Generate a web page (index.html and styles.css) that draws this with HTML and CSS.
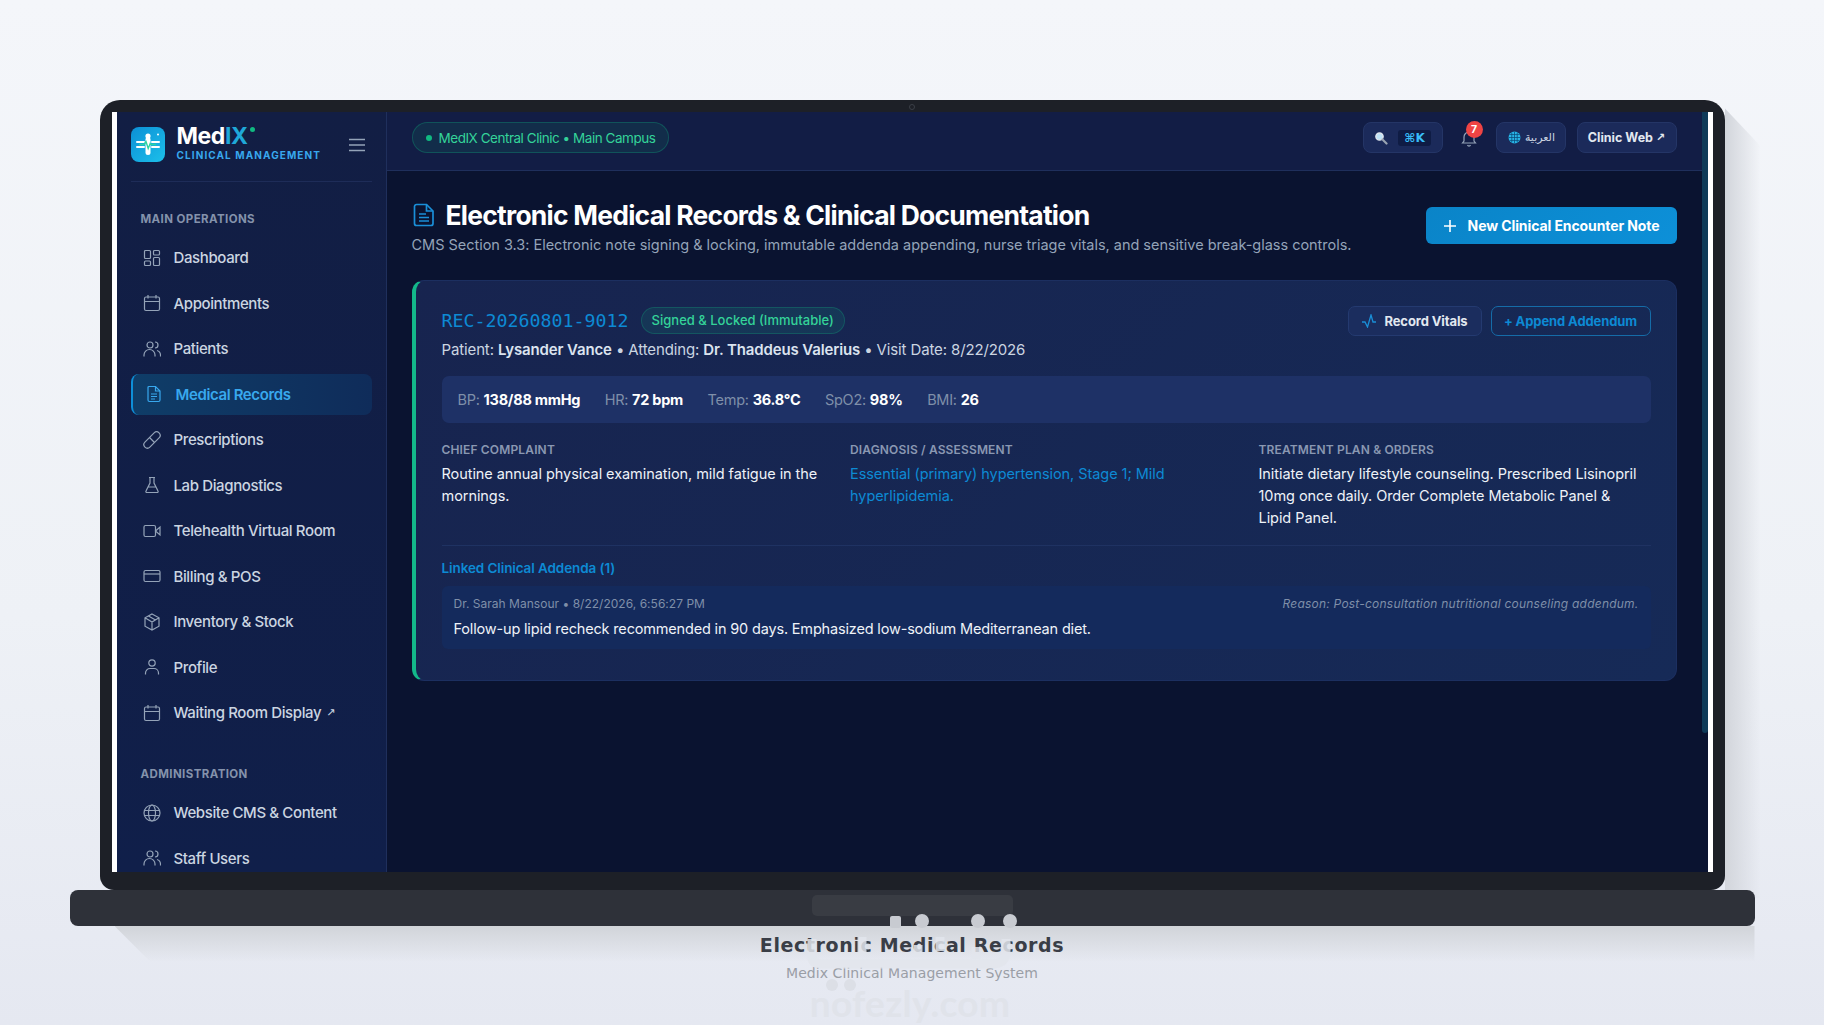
FILE: index.html
```html
<!DOCTYPE html>
<html lang="en">
  <head>
    <meta charset="UTF-8" />
    <meta name="viewport" content="width=device-width, initial-scale=1.0" />
    <title>Electronic Medical Records</title>
    <link rel="stylesheet" href="styles.css">
  </head>
  <body>
    <div class="lid">
      <span class="camera"></span>
      <div class="screen">
        <div class="app">
          <aside class="sidebar">
            <div class="brand">
              <svg class="brand-logo" viewBox="0 0 34 35">
                <defs>
                  <linearGradient id="logoFill" x1="0" y1="0" x2="1" y2="1">
                    <stop offset="0" stop-color="#0c8fd6" />
                    <stop offset="1" stop-color="#1cc0ea" />
                  </linearGradient>
                </defs>
                <rect width="34" height="35" rx="8" fill="url(#logoFill)" />
                <circle cx="17" cy="9" r="2.600" fill="#fff" />
                <rect x="14.500" y="10" width="5" height="18" rx="2.500" fill="#fff" />
                <path d="M6 15h7M21 15h7M6 20h7M21 20h7" stroke="#fff" stroke-width="2" stroke-linecap="round" />
                <path d="M8 17.500h5l2-3 2.200 7 2-5 1 1h5" fill="none" stroke="#2dd4a0" stroke-width="1.400" />
                <circle cx="27" cy="7.500" r="1" fill="#fff" />
              </svg>
              <div class="brand-text">
                <div class="brand-name">Med<span class="brand-ix">IX</span><span class="brand-dot"></span></div>
                <div class="brand-sub">CLINICAL MANAGEMENT</div>
              </div>
              <svg class="burger" viewBox="0 0 18 14"><path d="M1 1.500h16M1 7h16M1 12.500h16" /></svg>
            </div>

            <div class="nav-label">MAIN OPERATIONS</div>
            <nav class="nav">
              <a class="nav-item"><svg viewBox="0 0 18 18"><rect x="1.500" y="1.500" width="6" height="8" rx="1" /><rect x="10.500" y="1.500" width="6" height="4.500" rx="1" /><rect x="1.500" y="12" width="6" height="4.500" rx="1" /><rect x="10.500" y="8.500" width="6" height="8" rx="1" /></svg>Dashboard</a>
              <a class="nav-item"><svg viewBox="0 0 18 18"><rect x="1.500" y="3" width="15" height="13.500" rx="1.500" /><path d="M5 1v3.500M13 1v3.500M1.500 7.500h15" /></svg>Appointments</a>
              <a class="nav-item"><svg viewBox="0 0 18 18"><circle cx="7" cy="5" r="3" /><path d="M1 16.500v-1.500a5.500 5.500 0 0 1 11 0v1.500M12 2a3 3 0 0 1 0 6M14 10.500a5 5 0 0 1 3.500 4.500v1.500" /></svg>Patients</a>
              <a class="nav-item nav-item-active"><svg viewBox="0 0 18 18"><path d="M4 1.500h6.500L15 6v9a1.500 1.500 0 0 1-1.500 1.500h-9A1.500 1.500 0 0 1 3 15V2.500a1 1 0 0 1 1-1z" /><path d="M10.500 1.500V6H15M6 9h6M6 11.500h6M6 14h4" /></svg>Medical Records</a>
              <a class="nav-item"><svg viewBox="0 0 18 18"><rect x="-1" y="5.500" width="20" height="7" rx="3.500" transform="rotate(-45 9 9)" /><path d="M6.500 6.500l5 5" /></svg>Prescriptions</a>
              <a class="nav-item"><svg viewBox="0 0 18 18"><path d="M6 1.500h6M7 1.500v5.500L3 15a1 1 0 0 0 1 1.500h10A1 1 0 0 0 15 15l-4-8V1.500M5 11h8" /></svg>Lab Diagnostics</a>
              <a class="nav-item"><svg viewBox="0 0 18 18"><rect x="1" y="3.500" width="11.500" height="11" rx="1.500" /><path d="M12.500 9L17 5v8z" /></svg>Telehealth Virtual Room</a>
              <a class="nav-item"><svg viewBox="0 0 18 18"><rect x="1" y="3.500" width="16" height="11" rx="1.500" /><path d="M1 7h16" /></svg>Billing &amp; POS</a>
              <a class="nav-item"><svg viewBox="0 0 18 18"><path d="M9 1l7 3.800v8.400L9 17l-7-3.800V4.800zM2 4.800L9 9l7-4.200M9 9v8M5.500 2.900l7 4" /></svg>Inventory &amp; Stock</a>
              <a class="nav-item"><svg viewBox="0 0 18 18"><circle cx="9" cy="5" r="3.200" /><path d="M2.500 16.500v-1.500a4.500 4.500 0 0 1 4.500-4.500h4a4.500 4.500 0 0 1 4.500 4.500v1.500" /></svg>Profile</a>
              <a class="nav-item"><svg viewBox="0 0 18 18"><rect x="1.500" y="3" width="15" height="13.500" rx="1.500" /><path d="M5 1v3.500M13 1v3.500M1.500 7.500h15" /></svg>Waiting Room Display <span class="nav-ext">↗</span></a>
            </nav>

            <div class="nav-label nav-label-second">ADMINISTRATION</div>
            <nav class="nav">
              <a class="nav-item"><svg viewBox="0 0 18 18"><circle cx="9" cy="9" r="8" /><ellipse cx="9" cy="9" rx="3.500" ry="8" /><path d="M1.500 6.500h15M1.500 11.500h15" /></svg>Website CMS &amp; Content</a>
              <a class="nav-item"><svg viewBox="0 0 18 18"><circle cx="7" cy="5" r="3" /><path d="M1 16.500v-1.500a5.500 5.500 0 0 1 11 0v1.500M12 2a3 3 0 0 1 0 6M14 10.500a5 5 0 0 1 3.500 4.500v1.500" /></svg>Staff Users</a>
            </nav>
          </aside>

          <div class="main">
            <header class="topbar">
              <div class="clinic-chip"><span class="clinic-dot"></span>MedIX Central Clinic • Main Campus</div>
              <div class="topbar-actions">
                <div class="top-btn search-btn">
                  <svg class="search-icon" viewBox="0 0 14 14"><circle cx="5.500" cy="5.500" r="3.600" fill="#bfe3f7" stroke="#dfe6ee" stroke-width="1.500" /><path d="M8.500 8.500l4 4" stroke="#9aa4b2" stroke-width="2.200" stroke-linecap="round" /></svg>
                  <span class="kbd">⌘K</span>
                </div>
                <div class="bell">
                  <svg viewBox="0 0 18 18"><path d="M4 12V8a5 5 0 0 1 10 0v4l1.500 2h-13zM7.500 16a1.600 1.600 0 0 0 3 0" /></svg>
                  <span class="bell-badge">7</span>
                </div>
                <div class="top-btn lang-btn">
                  <svg class="globe-icon" viewBox="0 0 12 12"><circle cx="6" cy="6" r="5.500" fill="#29b6e8" /><path d="M.5 6h11M6 .5v11M1.500 3.300h9M1.500 8.700h9M3.500 1.500v9M8.500 1.500v9" stroke="#0b4a78" stroke-width=".7" fill="none" /></svg>
                  <span class="lang-text">العربية</span>
                </div>
                <div class="top-btn web-btn">Clinic Web&nbsp;<span class="arrow">↗</span></div>
              </div>
            </header>

            <main class="content">
              <div class="page-head">
                <div>
                  <h1 class="page-title">
                    <svg viewBox="0 0 22 24"><path d="M3.500 1.500h10L20 8v12.500a2 2 0 0 1-2 2H3.500a2 2 0 0 1-2-2v-17a2 2 0 0 1 2-2z" /><path d="M13.500 1.500V8H20M6 11h7M6 14.500h10M6 18h10" /></svg>
                    Electronic Medical Records &amp; Clinical Documentation
                  </h1>
                  <p class="page-sub">CMS Section 3.3: Electronic note signing &amp; locking, immutable addenda appending, nurse triage vitals, and sensitive break-glass controls.</p>
                </div>
                <button class="primary-btn">
                  <svg viewBox="0 0 14 14"><path d="M7 1v12M1 7h12" /></svg>
                  New Clinical Encounter Note
                </button>
              </div>

              <section class="record-card">
                <div class="record-head">
                  <div>
                    <div class="record-id-row">
                      <span class="record-id">REC-20260801-9012</span>
                      <span class="status-badge">Signed &amp; Locked (Immutable)</span>
                    </div>
                    <div class="record-meta">Patient: <strong>Lysander Vance</strong> • Attending: <strong>Dr. Thaddeus Valerius</strong> • Visit Date: 8/22/2026</div>
                  </div>
                  <div class="record-actions">
                    <button class="ghost-btn">
                      <svg viewBox="0 0 16 14"><path d="M1 8h3l2.500 5L10 1l2 7h3" /></svg>
                      Record Vitals
                    </button>
                    <button class="outline-btn">+ Append Addendum</button>
                  </div>
                </div>

                <div class="vitals">
                  <span>BP: <b>138/88 mmHg</b></span>
                  <span>HR: <b>72 bpm</b></span>
                  <span>Temp: <b>36.8°C</b></span>
                  <span>SpO2: <b>98%</b></span>
                  <span>BMI: <b>26</b></span>
                </div>

                <div class="notes">
                  <div>
                    <div class="note-label">CHIEF COMPLAINT</div>
                    <p class="note-text">Routine annual physical examination, mild fatigue in the mornings.</p>
                  </div>
                  <div>
                    <div class="note-label">DIAGNOSIS / ASSESSMENT</div>
                    <p class="note-text note-text-blue">Essential (primary) hypertension, Stage 1; Mild hyperlipidemia.</p>
                  </div>
                  <div>
                    <div class="note-label">TREATMENT PLAN &amp; ORDERS</div>
                    <p class="note-text">Initiate dietary lifestyle counseling. Prescribed Lisinopril 10mg once daily. Order Complete Metabolic Panel &amp; Lipid Panel.</p>
                  </div>
                </div>

                <div class="addenda-title">Linked Clinical Addenda (1)</div>
                <div class="addendum">
                  <div class="addendum-meta">
                    <span>Dr. Sarah Mansour • 8/22/2026, 6:56:27 PM</span>
                    <em>Reason: Post-consultation nutritional counseling addendum.</em>
                  </div>
                  <div class="addendum-text">Follow-up lipid recheck recommended in 90 days. Emphasized low-sodium Mediterranean diet.</div>
                </div>
              </section>
            </main>
          </div>
          <div class="scrollbar"><div class="scrollbar-thumb"></div></div>
        </div>
      </div>
    </div>
    <div class="base"><span class="base-notch"></span></div>

    <div class="caption">
      <div class="caption-title">Electronic Medical Records</div>
      <div class="caption-sub">Medix Clinical Management System</div>
    </div>

    <!-- watermark lies over the laptop base and the caption -->
    <div class="watermark">
      <svg class="watermark-mark" viewBox="0 0 240 90">
        <g fill="#c8cbd1">
          <rect x="100" y="11" width="11" height="12" rx="2" />
          <circle cx="132" cy="16" r="7" />
          <circle cx="188" cy="16" r="7" />
          <circle cx="220" cy="16" r="7" />
        </g>
        <path class="watermark-stroke" d="M22 34v18q0 7 10 7h170q14 0 14-12V34M72 32v18M128 40v12M150 32v14M186 42v12" />
        <circle cx="42" cy="80" r="6" fill="#dcdfe6" />
        <circle cx="60" cy="80" r="6" fill="#dcdfe6" />
      </svg>
      <div class="watermark-text">nofezly.com</div>
    </div>
  </body>
</html>
```

FILE: styles.css
```css
:root {
  --navy-side: #121f47;
  --navy-main: #0a1330;
  --line: #1f2f5c;
  --blue: #0d8ad4;
  --sky: #38a8ee;
  --green: #2fd29a;
  --slate: #94a3b8;
  --soft: #cbd5e1;
  --white: #ffffff;
}

* {
  margin: 0;
  padding: 0;
  box-sizing: border-box;
}

html,
body {
  height: 100%;
}

body {
  position: relative;
  padding-top: 100px;
  overflow: hidden;
  background: linear-gradient(180deg, #f4f6fa 0%, #eef1f6 60%, #e5e8f1 100%);
  font-family: "Inter", "Noto Sans", sans-serif;
  color: var(--white);
}

/* laptop shell */
.lid {
  position: relative;
  width: 1625px;
  height: 790px;
  margin: 0 auto;
  padding: 12px 12px 18px;
  background: #1d2027;
  border-radius: 20px 20px 14px 14px;
}

.lid::after {
  content: "";
  position: absolute;
  top: 8px;
  left: 100%;
  width: 36px;
  height: 100%;
  background: linear-gradient(90deg, #d2d5db, rgba(226, 229, 235, 0));
  clip-path: polygon(0 0, 100% 38px, 100% 100%, 0 100%);
}

.camera {
  position: absolute;
  top: 4px;
  left: 809px;
  width: 6px;
  height: 6px;
  border: 1px solid #3a3e47;
  border-radius: 50%;
}

.screen {
  height: 100%;
  padding: 0 5px;
  background: var(--white);
}

.app {
  display: flex;
  height: 100%;
  overflow: hidden;
  background: var(--navy-main);
}

.base {
  position: relative;
  display: flex;
  justify-content: center;
  width: 1685px;
  height: 36px;
  margin: 0 auto;
  padding-top: 5px;
  background: #2e3139;
  border-radius: 8px;
}

.base::after {
  content: "";
  position: absolute;
  top: 100%;
  left: 45px;
  right: 0;
  height: 36px;
  background: linear-gradient(180deg, #d1d4d9, rgba(229, 232, 241, 0));
  clip-path: polygon(0 0, 100% 0, 100% 100%, 36px 100%);
}

.base-notch {
  width: 201px;
  height: 21px;
  background: #393c43;
  border-radius: 5px;
}

.caption {
  position: relative;
  z-index: 1;
  margin-top: 5px;
  text-align: center;
  font-family: "DejaVu Sans", sans-serif;
}

.caption-title {
  font-size: 19px;
  line-height: 28px;
  font-weight: 700;
  letter-spacing: .62px;
  color: #3a3e47;
}

.caption-sub {
  margin-top: 4px;
  font-size: 14px;
  line-height: 20px;
  letter-spacing: .06px;
  color: #9a9ea6;
}

.watermark {
  position: absolute;
  z-index: 2;
  top: 905px;
  left: 790px;
  width: 240px;
  pointer-events: none;
}

.watermark-mark {
  display: block;
  width: 240px;
  height: 90px;
}

.watermark-stroke {
  fill: none;
  stroke: #e2e5ec;
  stroke-width: 9;
  opacity: .85;
}

.watermark-text {
  margin-top: -10px;
  text-align: center;
  font-family: "Lato", sans-serif;
  font-size: 37px;
  line-height: 36px;
  font-weight: 700;
  letter-spacing: .3px;
  color: #e0e3ea;
}

/* sidebar */
.sidebar {
  flex: 0 0 270px;
  padding: 15px 14px 0;
  overflow: hidden;
  background: linear-gradient(180deg, #121e44, #101f4a);
  border-right: 1px solid var(--line);
}

.brand {
  display: flex;
  align-items: center;
  height: 55px;
  padding-bottom: 19px;
  border-bottom: 1px solid #1e2c58;
}

.brand-logo {
  flex: 0 0 34px;
  width: 34px;
  height: 35px;
}

.brand-text {
  margin-left: 12px;
  margin-top: -3px;
}

.brand-name {
  font-size: 23px;
  line-height: 25px;
  font-weight: 700;
  letter-spacing: -.4px;
}

.brand-ix {
  color: #1fa8d8;
}

.brand-dot {
  display: inline-block;
  width: 5px;
  height: 5px;
  margin: 0 0 12px 2px;
  background: #10b981;
  border-radius: 50%;
}

.brand-sub {
  font-size: 10px;
  line-height: 13px;
  font-weight: 700;
  letter-spacing: 1.1px;
  color: var(--sky);
}

.burger {
  width: 18px;
  height: 14px;
  margin-left: auto;
  margin-right: 6px;
  fill: none;
  stroke: #94a3b8;
  stroke-width: 1.5;
}

.nav-label {
  margin: 30px 0 11px 10px;
  font-size: 11.5px;
  line-height: 14px;
  font-weight: 700;
  letter-spacing: .4px;
  color: #8492ab;
}

.nav-label-second {
  margin-top: 34px;
}

.nav {
  display: flex;
  flex-direction: column;
  gap: 4.5px;
}

.nav-item {
  display: flex;
  align-items: center;
  gap: 13px;
  height: 41px;
  padding-left: 12px;
  font-size: 15px;
  font-weight: 500;
  letter-spacing: -.38px;
  color: var(--soft);
  border-radius: 8px;
}

.nav-item svg {
  flex: 0 0 18px;
  width: 18px;
  height: 18px;
  fill: none;
  stroke: #94a3b8;
  stroke-width: 1.2;
}

.nav-item-active {
  font-weight: 600;
  color: var(--sky);
  background: linear-gradient(90deg, #0f3d68, #0f2c5a);
  border-left: 2px solid #0e8fd8;
}

.nav-item-active svg {
  stroke: var(--sky);
}

.nav-ext {
  margin-left: -8px;
  font-family: "DejaVu Sans", sans-serif;
  font-size: 11px;
}

/* main column */
.main {
  flex: 1;
  min-width: 0;
}

.scrollbar {
  flex: 0 0 6px;
}

.scrollbar-thumb {
  height: 621px;
  background: #0f3a58;
  border-radius: 0 0 3px 3px;
}

.topbar {
  display: flex;
  align-items: flex-start;
  justify-content: space-between;
  height: 59px;
  padding: 10px 25px 0;
  background: #121d45;
  border-bottom: 1px solid var(--line);
}

.clinic-chip {
  display: flex;
  align-items: center;
  gap: 7px;
  height: 31px;
  padding: 0 13px;
  font-size: 13.5px;
  letter-spacing: -.47px;
  color: #34d399;
  background: rgba(16, 185, 129, .1);
  border: 1px solid rgba(16, 185, 129, .28);
  border-radius: 16px;
}

.clinic-dot {
  width: 6px;
  height: 6px;
  background: #10b981;
  border-radius: 50%;
}

.topbar-actions {
  display: flex;
  align-items: center;
  height: 31px;
}

.top-btn {
  display: flex;
  align-items: center;
  justify-content: center;
  height: 31px;
  background: #1b2a5a;
  border: 1px solid #243566;
  border-radius: 8px;
  font-size: 12.5px;
  font-weight: 700;
}

.search-btn {
  gap: 10px;
  width: 80px;
}

.search-icon {
  width: 14px;
  height: 14px;
}

.kbd {
  padding: 1px 6px;
  font-family: "DejaVu Sans", sans-serif;
  font-size: 12px;
  color: #38bdf8;
  background: #0f1c44;
  border-radius: 3px;
}

.bell {
  position: relative;
  width: 18px;
  height: 18px;
  margin: 0 18px 0 17px;
}

.bell svg {
  width: 18px;
  height: 18px;
  fill: none;
  stroke: #94a3b8;
  stroke-width: 1.2;
}

.bell-badge {
  position: absolute;
  top: -8px;
  left: 6px;
  width: 17px;
  height: 17px;
  font-size: 10.5px;
  line-height: 17px;
  font-weight: 700;
  text-align: center;
  background: #ef4444;
  border-radius: 50%;
}

.lang-btn {
  gap: 4px;
  width: 70px;
  padding-left: 2px;
}

.globe-icon {
  width: 13px;
  height: 13px;
}

.lang-text {
  font-family: "DejaVu Sans", sans-serif;
  font-size: 11px;
  font-weight: 400;
  color: var(--soft);
}

.web-btn {
  width: 100px;
  margin-left: 11px;
  color: #e2e8f0;
}

.arrow {
  font-family: "DejaVu Sans", sans-serif;
  font-size: 11px;
}

.content {
  padding: 26px 25px 0;
}

.page-head {
  display: flex;
  align-items: flex-start;
  justify-content: space-between;
  margin-bottom: 24px;
}

.page-title {
  display: flex;
  align-items: center;
  gap: 11px;
  font-size: 26.5px;
  line-height: 36px;
  font-weight: 700;
  letter-spacing: -.77px;
}

.page-title svg {
  width: 22px;
  height: 24px;
  margin-left: 1px;
  fill: none;
  stroke: #1a8fd8;
  stroke-width: 1.7;
}

.page-sub {
  margin-top: 1px;
  font-size: 14.5px;
  line-height: 22px;
  letter-spacing: -.02px;
  color: var(--slate);
}

.primary-btn {
  display: flex;
  align-items: center;
  justify-content: center;
  gap: 11px;
  width: 251px;
  height: 37px;
  margin-top: 10px;
  font-family: inherit;
  font-size: 14px;
  font-weight: 700;
  letter-spacing: -.1px;
  color: var(--white);
  background: linear-gradient(135deg, #0a84c8, #0d90d8);
  border: none;
  border-radius: 6px;
}

.primary-btn svg {
  width: 14px;
  height: 14px;
  fill: none;
  stroke: #fff;
  stroke-width: 1.6;
}

/* record card */
.record-card {
  padding: 25px 25px 31px 26px;
  background: linear-gradient(135deg, #17244f, #162a57);
  border: 1px solid #1c2f60;
  border-left: 4px solid #13b88a;
  border-radius: 12px;
}

.record-head {
  display: flex;
  justify-content: space-between;
}

.record-id-row {
  display: flex;
  align-items: center;
  gap: 12px;
  height: 29px;
}

.record-id {
  font-family: "DejaVu Sans Mono", monospace;
  font-size: 18.3px;
  color: var(--blue);
}

.status-badge {
  padding: 0 10px;
  font-size: 13px;
  line-height: 25px;
  font-weight: 500;
  color: #34d399;
  background: rgba(16, 185, 129, .12);
  border: 1px solid rgba(16, 185, 129, .25);
  border-radius: 14px;
}

.record-meta {
  margin-top: 4px;
  font-size: 15px;
  line-height: 22px;
  letter-spacing: -.13px;
  color: var(--soft);
}

.record-meta strong {
  font-weight: 600;
  color: #dbe3ef;
}

.record-actions {
  display: flex;
  gap: 9px;
}

.ghost-btn,
.outline-btn {
  display: flex;
  align-items: center;
  justify-content: center;
  height: 30px;
  font-family: inherit;
  font-size: 13px;
  font-weight: 700;
  letter-spacing: -.1px;
  border-radius: 7px;
}

.ghost-btn {
  gap: 7px;
  width: 134px;
  color: #e2e8f0;
  background: #1b2d5e;
  border: 1px solid #243a70;
}

.ghost-btn svg {
  width: 16px;
  height: 14px;
  fill: none;
  stroke: #1a8fd8;
  stroke-width: 1.3;
}

.outline-btn {
  width: 160px;
  color: var(--blue);
  background: transparent;
  border: 1px solid #156ca8;
}

.vitals {
  display: flex;
  align-items: center;
  gap: 24.5px;
  height: 47px;
  margin-top: 15px;
  padding: 0 16px;
  font-size: 14.5px;
  letter-spacing: -.25px;
  color: #7f8fa9;
  background: #1e3166;
  border-radius: 7px;
}

.vitals b {
  font-weight: 700;
  color: var(--white);
}

.notes {
  display: grid;
  grid-template-columns: repeat(3, 1fr);
  gap: 0 16.5px;
  margin-top: 19px;
  padding-bottom: 16px;
  border-bottom: 1px solid #1f3262;
}

.note-label {
  font-size: 12px;
  line-height: 16px;
  font-weight: 600;
  letter-spacing: .15px;
  color: #8a98b2;
}

.note-text {
  margin-top: 5px;
  padding-right: 6px;
  font-size: 14.5px;
  line-height: 22px;
  letter-spacing: -.06px;
  color: #eef2f8;
}

.note-text-blue {
  color: var(--blue);
}

.addenda-title {
  margin-top: 13px;
  font-size: 13.5px;
  line-height: 18px;
  font-weight: 600;
  letter-spacing: -.1px;
  color: var(--blue);
}

.addendum {
  margin-top: 9px;
  padding: 10px 12px 9px;
  background: #142a5c;
  border-radius: 6px;
}

.addendum-meta {
  display: flex;
  justify-content: space-between;
  font-size: 12px;
  line-height: 16px;
  letter-spacing: .02px;
  color: #7f8fa9;
}

.addendum-meta em {
  letter-spacing: .22px;
}

.addendum-text {
  margin-top: 6px;
  font-size: 14.5px;
  line-height: 22px;
  letter-spacing: -.17px;
  color: #eef2f8;
}
```
